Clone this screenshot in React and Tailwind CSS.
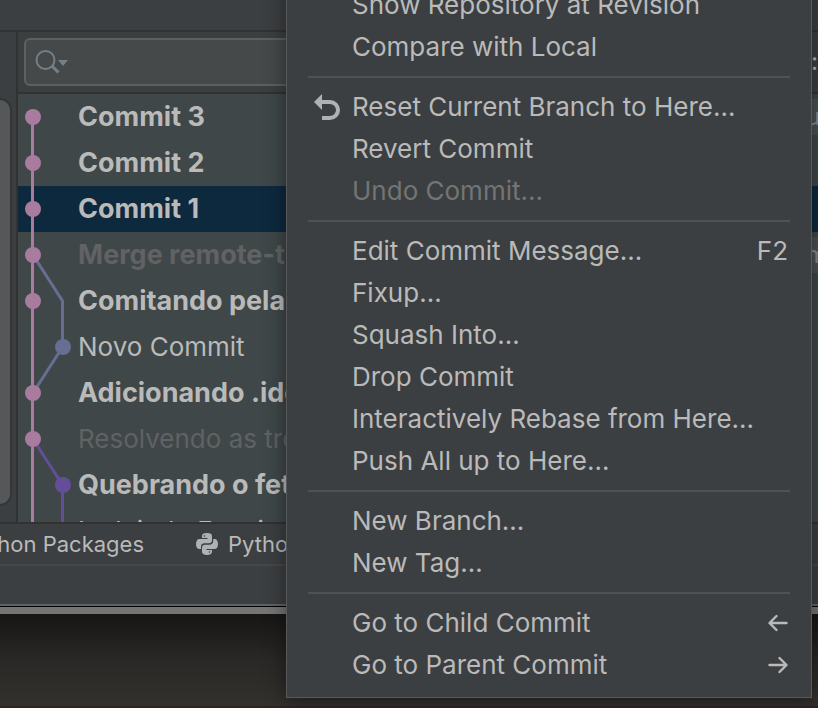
import React, { useState } from 'react'

const COMMITS = [
  { id: 1, title: 'Commit 3', bold: true, tag: 'u' },
  { id: 2, title: 'Commit 2', bold: true },
  { id: 3, title: 'Commit 1', bold: true },
  { id: 4, title: 'Merge remote-tracking', bold: true, muted: true, tag: 'm' },
  { id: 5, title: 'Comitando pela IDE', bold: true },
  { id: 6, title: 'Novo Commit' },
  { id: 7, title: 'Adicionando .idea', bold: true },
  { id: 8, title: 'Resolvendo as tretas', muted: true },
  { id: 9, title: 'Quebrando o fetch', bold: true },
  { id: 10, title: 'Incluindo Funcionalidade' },
]

const MENU = [
  [
    { label: 'Show Repository at Revision' },
    { label: 'Compare with Local' },
  ],
  [
    { label: 'Reset Current Branch to Here…', icon: true },
    { label: 'Revert Commit' },
    { label: 'Undo Commit…', disabled: true },
  ],
  [
    { label: 'Edit Commit Message…', hint: 'F2' },
    { label: 'Fixup…' },
    { label: 'Squash Into…' },
    { label: 'Drop Commit' },
    { label: 'Interactively Rebase from Here…' },
    { label: 'Push All up to Here…' },
  ],
  [
    { label: 'New Branch…' },
    { label: 'New Tag…' },
  ],
  [
    { label: 'Go to Child Commit', arrow: 'left' },
    { label: 'Go to Parent Commit', arrow: 'right' },
  ],
]

function SearchIcon() {
  return (
    <svg width="34" height="26" viewBox="0 0 34 26" fill="none" aria-hidden="true">
      <circle cx="10.5" cy="11" r="9" stroke="#748087" strokeWidth="2" />
      <path d="M17 17 L23.5 23.5" stroke="#748087" strokeWidth="3" />
      <path d="M23 11 H33 L28 17 Z" fill="#748087" />
    </svg>
  )
}

function ResetIcon() {
  return (
    <svg width="26" height="26" viewBox="0 0 26 26" fill="none" aria-hidden="true">
      <path d="M8 8 H16 A8 8 0 0 1 16 24 H8" stroke="#afb1b3" strokeWidth="4" />
      <path d="M8 0 V16 L0 8 Z" fill="#afb1b3" />
    </svg>
  )
}

function ArrowIcon({ direction }) {
  return (
    <svg
      width="20"
      height="18"
      viewBox="0 0 20 18"
      fill="none"
      stroke="#bababa"
      strokeWidth="2.4"
      strokeLinecap="round"
      strokeLinejoin="round"
      aria-hidden="true"
    >
      {direction === 'left'
        ? <path d="M18.500 9 H2 M8.500 2 L1.500 9 L8.500 16" />
        : <path d="M1.500 9 H18 M11.500 2 L18.500 9 L11.500 16" />}
    </svg>
  )
}

function PythonIcon() {
  return (
    <svg width="22" height="22" viewBox="0 0 22 22" fill="#afb1b3" aria-hidden="true">
      <path d="M11 0 C7.500 0 6 1.200 6 3.200 V5 H11.500 V6 H3.500 C1.300 6 0 8 0 11 C0 14 1.300 16 3.500 16 H5 V13.500 C5 11.500 6.500 10.300 8.500 10.300 H13 C14.800 10.300 16 9 16 7.300 V3.200 C16 1.200 14.500 0 11 0 Z" />
      <path d="M11 22 C14.500 22 16 20.800 16 18.800 V17 H10.500 V16 H18.500 C20.700 16 22 14 22 11 C22 8 20.700 6 18.500 6 H17.200 V8.500 C17.200 10.500 15.500 11.700 13.500 11.700 H9 C7.200 11.700 6 13 6 14.700 V18.800 C6 20.800 7.500 22 11 22 Z" />
      <circle cx="8.500" cy="3" r="0.8" fill="#3c3f41" />
      <circle cx="13.500" cy="19" r="0.8" fill="#3c3f41" />
    </svg>
  )
}

// Branch lines, one 46px step per commit
function CommitGraph() {
  return (
    <svg width="60" height="460" viewBox="0 0 60 460" fill="none" aria-hidden="true">
      <path d="M15 161 L44.500 207 V253 L15 299" stroke="#666e93" strokeWidth="3" />
      <path d="M15 345 L44.500 391 V460" stroke="#654e99" strokeWidth="3" />
      <path d="M14.500 23 V460" stroke="#a97c9f" strokeWidth="3" />
      {[23, 69, 115, 161, 207, 299, 345].map(y => (
        <circle key={y} cx="15" cy={y} r="8" fill="#a97c9f" />
      ))}
      <circle cx="45" cy="253" r="8" fill="#666e93" />
      <circle cx="45" cy="391" r="8" fill="#654e99" />
    </svg>
  )
}

function CommitRow({ commit, selected, onSelect }) {
  return (
    <button
      onClick={onSelect}
      className={`flex h-[46px] w-full shrink-0 items-center justify-between pl-15 text-left whitespace-nowrap ${
        selected ? 'bg-[#0d293e]' : 'bg-[#3f4748]'
      } ${commit.bold ? 'text-[27px] font-bold' : 'pb-0.5 text-[26px]'} ${commit.muted ? 'text-[#606263]' : 'text-[#bababa]'}`}
    >
      <span>{commit.title}</span>
      {commit.tag && (
        <span className="w-5 overflow-hidden bg-[#4a5252] pl-2 text-2xl leading-9 font-normal text-[#8a8c8c]">
          {commit.tag}
        </span>
      )}
    </button>
  )
}

function ContextMenu() {
  return (
    <div
      role="menu"
      className="absolute -top-7 right-[6px] left-[286px] border border-[#57595a] bg-[#3c3f41] pt-[11px] pb-[11px] shadow-[0_4px_20px_rgba(0,0,0,0.45)]"
    >
      {MENU.map((group, index) => (
        <div key={index}>
          {index > 0 && <hr className="mx-[21px] my-2 border-t-2 border-[#515151]" />}
          {group.map(item => (
            <button
              key={item.label}
              role="menuitem"
              disabled={item.disabled}
              className={`flex h-[42px] w-full items-center pr-[23px] pl-[27px] text-left text-[26px] font-[425] whitespace-nowrap ${
                item.disabled ? 'text-[#747474]' : 'text-[#bababa]'
              }`}
            >
              <span className="w-[38px] shrink-0">{item.icon && <ResetIcon />}</span>
              <span className="flex-1 pb-0.5">{item.label}</span>
              {item.hint && <span className="pb-0.5">{item.hint}</span>}
              {item.arrow && <ArrowIcon direction={item.arrow} />}
            </button>
          ))}
        </div>
      ))}
    </div>
  )
}

export default function App() {
  const [selected, setSelected] = useState(3)

  return (
    <div className="relative flex h-screen flex-col overflow-hidden bg-[#3c3f41] font-['Inter','Liberation_Sans',sans-serif] text-[#bababa]">
      <div className="h-8 shrink-0 border-b-2 border-[#323232]" />

      <div className="flex min-h-0 flex-1 border-b-2 border-[#323232]">
        {/* Branches pane */}
        <div className="w-[18px] shrink-0 border-r-2 border-[#323232]">
          <div className="h-[62px]" />
          <div className="mt-1 h-[408px] w-3 rounded-r-xl border-2 border-l-0 border-[#333637] bg-[#565758]" />
        </div>

        {/* Log pane */}
        <div className="flex min-w-0 flex-1 flex-col">
          <div className="flex shrink-0 items-center justify-between border-b-2 border-[#323232] py-[6px] pl-[6px]">
            <label className="flex h-12 w-[600px] items-center rounded-md border-2 border-[#5e6060] bg-[#45494a] pl-[9px]">
              <SearchIcon />
              <input type="text" aria-label="Search commits" className="min-w-0 flex-1 bg-transparent text-[26px] outline-none" />
            </label>
            <span className="text-2xl">:</span>
          </div>
          <div className="relative flex min-h-0 flex-1 flex-col overflow-hidden">
            {COMMITS.map(commit => (
              <CommitRow
                key={commit.id}
                commit={commit}
                selected={commit.id === selected}
                onSelect={() => setSelected(commit.id)}
              />
            ))}
            <div className="pointer-events-none absolute top-0 left-0">
              <CommitGraph />
            </div>
          </div>
        </div>
      </div>

      {/* Tool window tabs */}
      <div className="flex h-[42px] shrink-0 items-center border-b-2 border-[#484746] text-[22px] font-[425] whitespace-nowrap">
        <button className="flex w-36 shrink-0 justify-end">Python Packages</button>
        <button className="ml-[52px] flex items-center gap-[10px]">
          <PythonIcon />
          Python Console
        </button>
      </div>
      <div className="h-10 shrink-0 border-b-2 border-[#606365]" />

      {/* Desktop below the window */}
      <div className="h-2 shrink-0 border-t border-black bg-[#757575]" />
      <div className="h-[94px] shrink-0 border-b-2 border-[#2d2424] bg-linear-to-b from-[#171615] via-[#2a2826] to-[#33312d]" />

      <ContextMenu />
    </div>
  )
}
